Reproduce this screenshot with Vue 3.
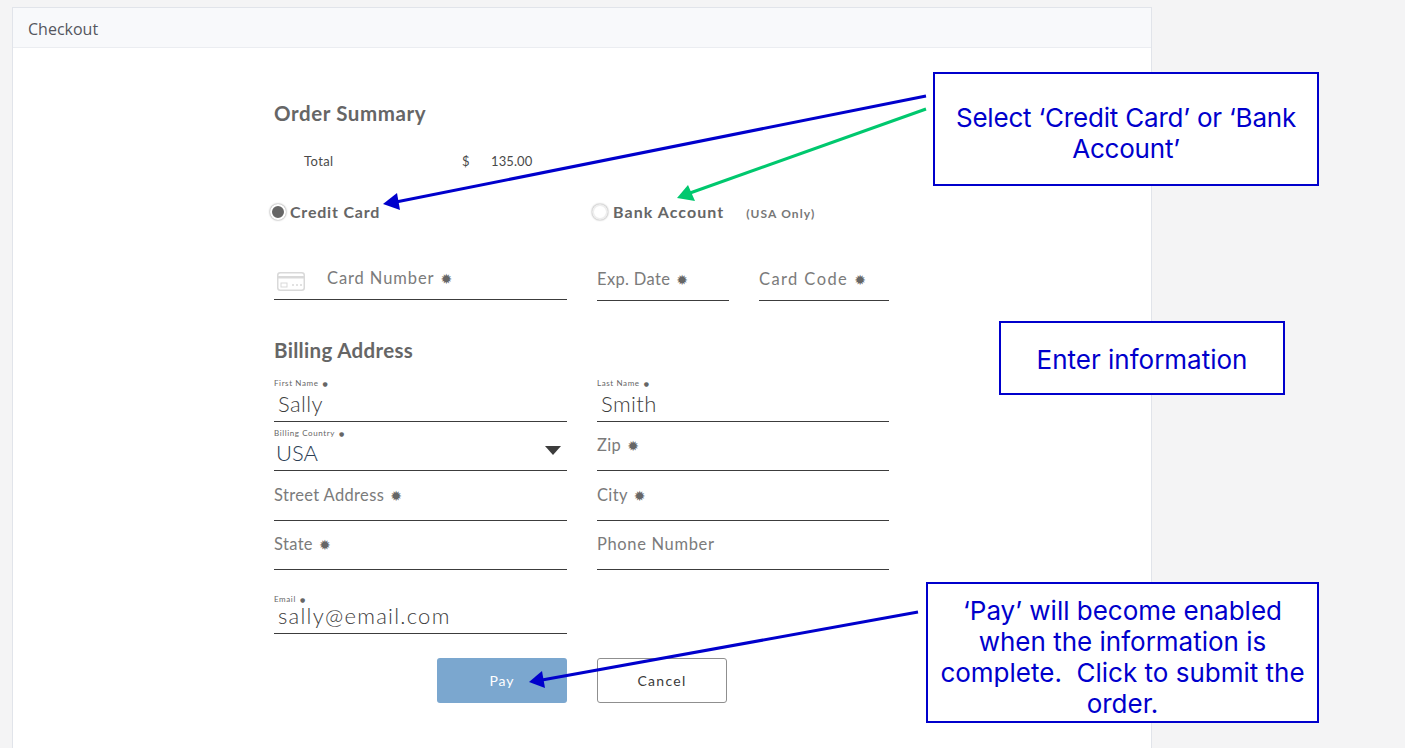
<template>
  <div class="page">
    <div class="card">
      <div class="card-header">Checkout</div>
      <div class="form">
        <h2 class="title summary-title">Order Summary</h2>
        <div class="total-row">
          <span class="total-label">Total</span>
          <span class="total-currency">$</span>
          <span class="total-value">135.00</span>
        </div>

        <div class="payment-row">
          <label class="radio-item">
            <span class="radio checked"></span>
            <span class="radio-text">Credit Card</span>
          </label>
          <label class="radio-item">
            <span class="radio"></span>
            <span class="radio-text">Bank Account</span>
            <span class="radio-note">(USA Only)</span>
          </label>
        </div>

        <div class="card-row">
          <div class="field card-number">
            <svg class="card-icon" width="28" height="19" viewBox="0 0 28 19" fill="none">
              <rect x="0.75" y="0.75" width="26.5" height="17.5" rx="2.5" stroke="#d9d9d9" stroke-width="1.5" />
              <rect x="1" y="4" width="26" height="2.5" fill="#d9d9d9" />
              <rect x="4" y="11" width="6" height="4" stroke="#d9d9d9" />
              <path d="M15 13h2M19 13h2M23 13h2" stroke="#d9d9d9" stroke-width="1.5" />
            </svg>
            <span class="placeholder wide">Card Number<i class="req">✹</i></span>
          </div>
          <div class="exp-group">
            <div class="field short"><span class="placeholder">Exp. Date<i class="req">✹</i></span></div>
            <div class="field short"><span class="placeholder wider">Card Code<i class="req">✹</i></span></div>
          </div>
        </div>

        <h2 class="title billing-title">Billing Address</h2>

        <div class="address-grid">
          <div class="field filled first-row" v-for="f in nameFields" :key="f.label">
            <span class="mini">{{ f.label }}<i class="req-mini">●</i></span>
            <span class="value">{{ f.value }}</span>
          </div>

          <div class="field filled select">
            <span class="mini">Billing Country<i class="req-mini">●</i></span>
            <span class="value country">USA</span>
            <span class="caret"></span>
          </div>
          <div class="field"><span class="placeholder">Zip<i class="req">✹</i></span></div>

          <div class="field street-row"><span class="placeholder">Street Address<i class="req">✹</i></span></div>
          <div class="field street-row"><span class="placeholder">City<i class="req">✹</i></span></div>

          <div class="field"><span class="placeholder">State<i class="req">✹</i></span></div>
          <div class="field"><span class="placeholder phone">Phone Number</span></div>

          <div class="field filled email">
            <span class="mini">Email<i class="req-mini">●</i></span>
            <span class="value">sally@email.com</span>
          </div>
        </div>

        <div class="actions">
          <button class="btn pay" type="button">Pay</button>
          <button class="btn cancel" type="button">Cancel</button>
        </div>
      </div>
    </div>

    <!-- annotation layer that sits on top of the screenshot -->
    <svg class="arrows" width="1405" height="748" viewBox="0 0 1405 748">
      <line v-for="a in arrows" :key="a.id" :x1="a.x1" :y1="a.y1" :x2="a.x2" :y2="a.y2" :stroke="a.color" stroke-width="3" />
      <polygon v-for="a in arrows" :key="a.id + '-head'" :points="a.head" :fill="a.color" />
    </svg>

    <div class="note note-select">Select ‘Credit Card’ or ‘Bank Account’</div>
    <div class="note note-enter">Enter information</div>
    <div class="note note-pay">‘Pay’ will become enabled when the information is complete.&nbsp; Click to submit the order.</div>
  </div>
</template>

<script setup>
const nameFields = [
  { label: 'First Name', value: 'Sally' },
  { label: 'Last Name', value: 'Smith' }
];

const arrows = [
  { id: 'credit', x1: 926, y1: 96, x2: 396, y2: 202, color: '#0000cc', head: '383,204 397,193 400,210' },
  { id: 'bank', x1: 926, y1: 109, x2: 690, y2: 193, color: '#00c86e', head: '677,198 688,185 695,201' },
  { id: 'pay', x1: 918, y1: 612, x2: 542, y2: 680, color: '#0000cc', head: '529,682 542,671 545,688' }
];
</script>

<style>
html, body {
  margin: 0;
  background: #f4f4f5;
  overflow: hidden;
}
</style>

<style scoped>
.page {
  position: relative;
  width: 1405px;
  height: 748px;
  padding: 7px 0 0 12px;
  box-sizing: border-box;
  overflow: hidden;
  background: #f4f4f5;
  font-family: "Lato", sans-serif;
  color: #666;
}

.card {
  width: 1140px;
  height: 760px;
  box-sizing: border-box;
  background: #fff;
  border: 1px solid #e1e4ea;
}

.card-header {
  height: 40px;
  box-sizing: border-box;
  padding-left: 15px;
  background: #f8f9fb;
  border-bottom: 1px solid #ebedf1;
  font-family: "Open Sans", sans-serif;
  font-size: 16px;
  line-height: 42px;
  color: #55565e;
}

.form {
  width: 616px;
  margin-left: 261px;
}

.title {
  margin: 0;
  font-size: 20.5px;
  font-weight: 700;
  line-height: 24px;
  color: #666;
}

.summary-title {
  padding-top: 53px;
  letter-spacing: 0.6px;
}

.total-row {
  display: flex;
  margin-top: 27px;
  height: 18px;
  font-size: 13px;
  line-height: 18px;
  color: #4a4a4a;
  letter-spacing: 0.4px;
}

.total-label {
  margin-left: 30px;
  width: 158px;
}

.total-currency {
  width: 29px;
}

.total-value {
  letter-spacing: 0.1px;
}

.payment-row {
  display: grid;
  grid-template-columns: 293px 292px;
  column-gap: 30px;
  margin-top: 33px;
  height: 18px;
}

.radio-item {
  display: flex;
  align-items: center;
  height: 18px;
  margin-left: -4px;
}

.radio {
  width: 16px;
  height: 16px;
  flex: none;
  box-sizing: border-box;
  margin-right: 4px;
  border-radius: 50%;
  background: #fff;
  border: 2px solid #eee;
  box-shadow: 0 0 2px rgba(0, 0, 0, 0.45);
}

.radio.checked {
  background: #666;
  border-color: #fff;
  box-shadow: 0 0 2px rgba(0, 0, 0, 0.55);
}

.radio-item:last-child {
  margin-left: -5px;
}

.radio-item:last-child .radio {
  margin-right: 5px;
}

.radio-text {
  padding-bottom: 2px;
  font-size: 16px;
  font-weight: 700;
  letter-spacing: 0.8px;
  color: #666;
}

.radio-item:last-child .radio-text {
  letter-spacing: 1.05px;
}

.radio-note {
  padding-top: 2px;
  margin-left: 22px;
  font-size: 12px;
  font-weight: 700;
  letter-spacing: 1.1px;
  color: #777;
}

.card-row {
  display: grid;
  grid-template-columns: 293px 292px;
  column-gap: 30px;
  margin-top: 34px;
}

.field {
  position: relative;
  display: flex;
  flex-direction: column;
  height: 49px;
  box-sizing: border-box;
  border-bottom: 1px solid #3c3c3c;
}

.street-row {
  height: 50px;
}

.card-number {
  flex-direction: row;
  height: 45px;
  padding-top: 13px;
}

.card-icon {
  margin: 4px 22px 0 3px;
  flex: none;
}

.exp-group {
  display: grid;
  grid-template-columns: 132px 130px;
  column-gap: 30px;
}

.short {
  height: 46px;
  padding-top: 14px;
}

.placeholder {
  font-size: 16.5px;
  line-height: 20px;
  color: #7b7b7b;
  letter-spacing: 0.35px;
  padding-top: 13px;
}

.street-row .placeholder {
  padding-top: 14px;
}

.placeholder.wide {
  letter-spacing: 0.9px;
}

.placeholder.wider {
  letter-spacing: 1.4px;
}

.placeholder.phone {
  letter-spacing: 0.65px;
}

.card-number .placeholder,
.short .placeholder {
  padding-top: 0;
}

.req {
  margin-left: 6px;
  font-family: "DejaVu Sans", sans-serif;
  font-style: normal;
  font-size: 14px;
  line-height: 0;
  letter-spacing: 0;
  color: #666;
}

.req-mini {
  margin-left: 4px;
  font-family: "DejaVu Sans", sans-serif;
  font-style: normal;
  font-size: 6px;
  color: #666;
}

.billing-title {
  margin-top: 37px;
  letter-spacing: 0.33px;
}

.address-grid {
  display: grid;
  grid-template-columns: 293px 292px;
  column-gap: 30px;
  margin-top: 13px;
}

.first-row {
  height: 47px;
}

.mini {
  font-size: 8px;
  line-height: 10px;
  margin-top: 3px;
  color: #666;
  letter-spacing: 0.6px;
}

.value {
  font-size: 22px;
  line-height: 26px;
  margin-top: 2px;
  padding-left: 4px;
  color: #3d3d3d;
  letter-spacing: 0.4px;
  font-weight: 300;
}

.select .mini {
  margin-top: 6px;
}

.select .value {
  margin-top: 1px;
}

.country {
  padding-left: 2px;
  color: #2c3e55;
  letter-spacing: 0;
}

.caret {
  position: absolute;
  right: 6px;
  top: 24px;
  width: 0;
  height: 0;
  border-left: 8px solid transparent;
  border-right: 8px solid transparent;
  border-top: 9px solid #3c3c3c;
}

.email {
  height: 44px;
  margin-top: 20px;
}

.email .mini {
  margin-top: 4px;
}

.email .value {
  margin-top: 0;
  line-height: 22px;
  letter-spacing: 1.25px;
}

.actions {
  display: flex;
  gap: 30px;
  margin-top: 24px;
  margin-left: 163px;
}

.btn {
  width: 130px;
  height: 45px;
  border-radius: 3px;
  font-family: "Lato", sans-serif;
  font-size: 14px;
  letter-spacing: 1px;
}

.pay {
  border: none;
  background: #7ba7cf;
  color: #fff;
}

.cancel {
  border: 1px solid #8f8f8f;
  background: #fff;
  color: #3a3a3a;
  letter-spacing: 1.3px;
}

.arrows {
  position: absolute;
  left: 0;
  top: 0;
}

.note {
  position: absolute;
  display: flex;
  align-items: center;
  justify-content: center;
  box-sizing: border-box;
  padding: 0 4px;
  border: 2px solid #0000cc;
  background: #fff;
  color: #0000cc;
  font-family: "Inter", sans-serif;
  font-size: 26px;
  line-height: 31px;
  text-align: center;
}

.note-select {
  left: 933px;
  top: 72px;
  width: 386px;
  height: 114px;
  padding-top: 8px;
  letter-spacing: -0.2px;
}

.note-enter {
  left: 999px;
  top: 321px;
  width: 286px;
  height: 74px;
  padding-top: 2px;
}

.note-pay {
  left: 926px;
  top: 582px;
  width: 393px;
  height: 141px;
  padding-top: 8px;
}
</style>
